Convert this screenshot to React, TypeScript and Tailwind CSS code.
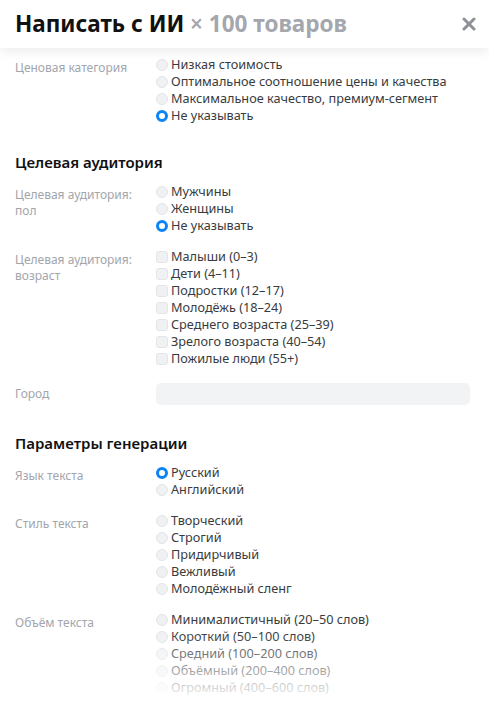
import React from "react";

// ---------------------------------------------------------------------------
// Types
// ---------------------------------------------------------------------------
interface Option {
  label: string;
  checked?: boolean;
}

interface Group {
  label: string[];
  kind: "radio" | "checkbox";
  options: Option[];
}

// ---------------------------------------------------------------------------
// Data
// ---------------------------------------------------------------------------
const PRICE: Group = {
  label: ["Ценовая категория"],
  kind: "radio",
  options: [
    { label: "Низкая стоимость" },
    { label: "Оптимальное соотношение цены и качества" },
    { label: "Максимальное качество, премиум-сегмент" },
    { label: "Не указывать", checked: true },
  ],
};

const AUDIENCE: Group[] = [
  {
    label: ["Целевая аудитория:", "пол"],
    kind: "radio",
    options: [
      { label: "Мужчины" },
      { label: "Женщины" },
      { label: "Не указывать", checked: true },
    ],
  },
  {
    label: ["Целевая аудитория:", "возраст"],
    kind: "checkbox",
    options: [
      { label: "Малыши (0–3)" },
      { label: "Дети (4–11)" },
      { label: "Подростки (12–17)" },
      { label: "Молодёжь (18–24)" },
      { label: "Среднего возраста (25–39)" },
      { label: "Зрелого возраста (40–54)" },
      { label: "Пожилые люди (55+)" },
    ],
  },
];

const GENERATION: Group[] = [
  {
    label: ["Язык текста"],
    kind: "radio",
    options: [{ label: "Русский", checked: true }, { label: "Английский" }],
  },
  {
    label: ["Стиль текста"],
    kind: "radio",
    options: [
      { label: "Творческий" },
      { label: "Строгий" },
      { label: "Придирчивый" },
      { label: "Вежливый" },
      { label: "Молодёжный сленг" },
    ],
  },
  {
    label: ["Объём текста"],
    kind: "radio",
    options: [
      { label: "Минималистичный (20–50 слов)" },
      { label: "Короткий (50–100 слов)" },
      { label: "Средний (100–200 слов)" },
      { label: "Объёмный (200–400 слов)" },
      { label: "Огромный (400–600 слов)" },
    ],
  },
];

// ---------------------------------------------------------------------------
// Pieces
// ---------------------------------------------------------------------------
function Control({ kind, checked }: { kind: Group["kind"]; checked?: boolean }) {
  if (kind === "checkbox") {
    return (
      <span className="w-[12px] h-[12px] shrink-0 rounded-[3px] border border-[#e3e5e8] bg-[#f0f1f3]" />
    );
  }
  if (checked) {
    return (
      <span className="w-[12px] h-[12px] shrink-0 rounded-full border-[3px] border-[#0b84f5] bg-white" />
    );
  }
  return (
    <span className="w-[12px] h-[12px] shrink-0 rounded-full border border-[#e3e5e8] bg-[#f0f1f3]" />
  );
}

function FieldRow({ group }: { group: Group }) {
  return (
    <div className="flex mb-[14px]">
      <div className="w-[141px] shrink-0 pt-[4px] text-[12px] leading-[16px] text-[#a2a5ac]">
        {group.label.map((l) => (
          <div key={l}>{l}</div>
        ))}
      </div>
      <div className="flex flex-col">
        {group.options.map((o) => (
          <label
            key={o.label}
            className="flex items-center gap-[3px] text-[12.7px] leading-[17px] text-[#393b40]"
          >
            <Control kind={group.kind} checked={o.checked} />
            <span>{o.label}</span>
          </label>
        ))}
      </div>
    </div>
  );
}

function SectionTitle({ children }: { children: React.ReactNode }) {
  return (
    <h3 className="mt-[14px] mb-[11px] text-[15px] leading-[20px] font-semibold text-[#111]">
      {children}
    </h3>
  );
}

// ---------------------------------------------------------------------------
// Page
// ---------------------------------------------------------------------------
export default function App() {
  return (
    <div
      className="h-[703px] w-full flex flex-col overflow-hidden bg-white"
      style={{ fontFamily: '"Noto Sans", "Open Sans", sans-serif' }}
    >
      {/* Header */}
      <header className="relative z-10 h-[48px] shrink-0 flex items-center justify-between pl-[15px] pr-[12px] bg-white shadow-[0_4px_10px_rgba(0,0,0,0.07)]">
        <h1 className="text-[22.5px] leading-[28px] font-bold text-[#111] whitespace-nowrap">
          Написать с ИИ{" "}
          <span className="text-[#a4a7ae]">
            <span className="font-semibold">×</span> 100 товаров
          </span>
        </h1>
        <button className="w-[16px] h-[16px] flex items-center justify-center text-[#8d9096]">
          <svg width="14" height="14" viewBox="0 0 14 14">
            <path
              d="M2 2 L12 12 M12 2 L2 12"
              stroke="currentColor"
              strokeWidth="3"
              strokeLinecap="round"
            />
          </svg>
        </button>
      </header>

      {/* Scrollable body */}
      <div className="relative flex-1 overflow-hidden">
        <div className="flex flex-col pl-[15px] pr-[19px] pt-[8px]">
          <FieldRow group={PRICE} />

          <SectionTitle>Целевая аудитория</SectionTitle>
          {AUDIENCE.map((g) => (
            <FieldRow key={g.label.join(" ")} group={g} />
          ))}

          <div className="flex items-center mb-[14px] mt-[2px]">
            <div className="w-[141px] shrink-0 text-[12px] leading-[16px] text-[#a2a5ac]">
              Город
            </div>
            <div className="flex-1 h-[22px] rounded-[5px] bg-[#f2f3f5]" />
          </div>

          <SectionTitle>Параметры генерации</SectionTitle>
          {GENERATION.map((g) => (
            <FieldRow key={g.label.join(" ")} group={g} />
          ))}
        </div>

        {/* Bottom fade */}
        <div className="pointer-events-none absolute inset-x-0 bottom-0 h-[70px] bg-gradient-to-b from-white/0 to-white" />
      </div>
    </div>
  );
}
